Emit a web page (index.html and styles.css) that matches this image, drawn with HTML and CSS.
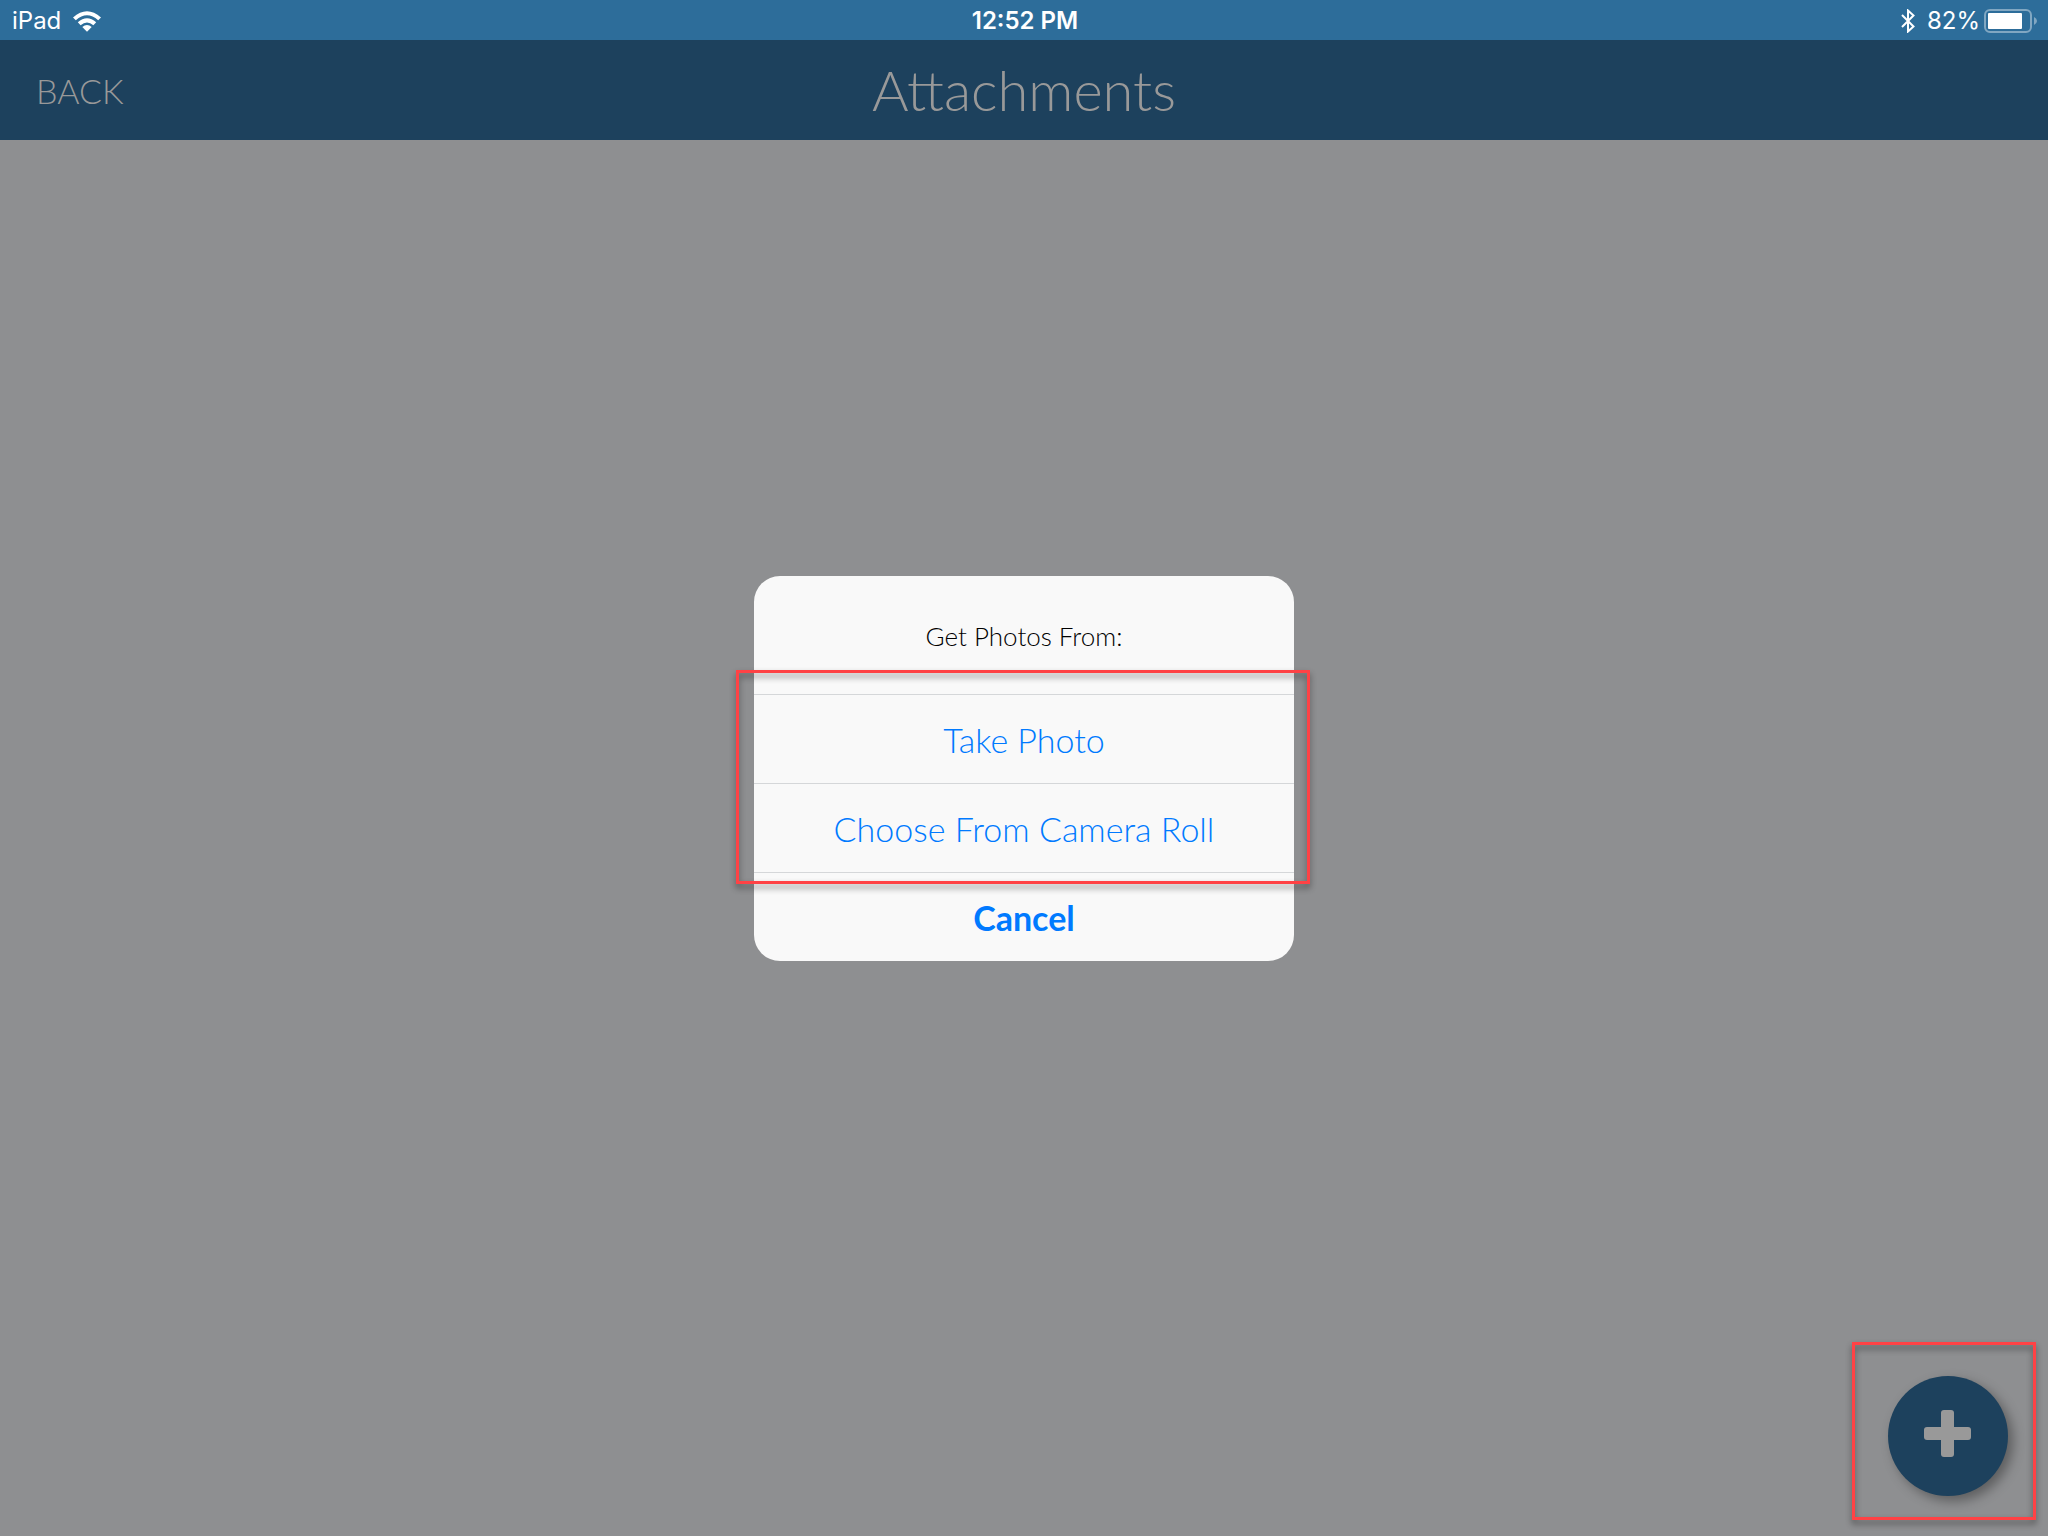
FILE: index.html
```html
<!DOCTYPE html>
<html lang="en">
<head>
  <meta charset="utf-8">
  <meta name="viewport" content="width=device-width, initial-scale=1">
  <title>Attachments</title>
  <link rel="stylesheet" href="styles.css">
</head>
<body>
  <div class="status-bar">
    <div class="status-left">
      <span>iPad</span>
      <svg class="wifi" width="28" height="21" viewBox="0 0 28 21" aria-label="Wi-Fi">
        <path d="M0 6.400Q14 -6 28 6.400L25.200 9.300Q14 -0.800 2.800 9.300Z"/>
        <path d="M4.800 11.300Q14 3 23.200 11.300L20.400 14.200Q14 8.600 7.600 14.200Z"/>
        <path d="M9.300 16Q14 12 18.700 16L14 20.800Z"/>
      </svg>
    </div>
    <time class="clock">12:52 PM</time>
    <div class="status-right">
      <svg class="bluetooth" width="14" height="24" viewBox="0 0 14 24" aria-label="Bluetooth">
        <path d="M1 6L12.500 17.500L7 22.500V1.500L12.500 6.500L1 18"/>
      </svg>
      <span>82%</span>
      <svg class="battery" width="54" height="24" viewBox="0 0 54 24" aria-label="Battery">
        <rect class="battery-case" x="1" y="1" width="46" height="22" rx="5"/>
        <rect class="battery-level" x="4" y="4" width="34" height="16" rx="1"/>
        <path class="battery-cap" d="M50 8Q53 9.500 53 12T50 16Z"/>
      </svg>
    </div>
  </div>

  <header class="nav-bar">
    <button class="back" type="button">BACK</button>
    <h1 class="page-title">Attachments</h1>
  </header>

  <main class="stage">
    <div class="add-area callout">
      <button class="add" type="button" aria-label="Add attachment">
        <svg width="48" height="48" viewBox="0 0 48 48">
          <rect x="17" y="0" width="13" height="47" rx="3"/>
          <rect x="0" y="17" width="47" height="13" rx="3"/>
        </svg>
      </button>
    </div>
  </main>

  <div class="overlay">
    <div class="dialog" role="dialog" aria-labelledby="dialog-title">
      <h2 class="dialog-title" id="dialog-title">Get Photos From:</h2>
      <div class="sources callout">
        <button class="option" type="button">Take Photo</button>
        <button class="option" type="button">Choose From Camera Roll</button>
      </div>
      <button class="option cancel" type="button">Cancel</button>
    </div>
  </div>
</body>
</html>
```
FILE: styles.css
```css
* {
  box-sizing: border-box;
}

body {
  margin: 0;
  min-height: 100vh;
  display: flex;
  flex-direction: column;
  background: #8e8f91;
  font-family: Lato, sans-serif;
  font-weight: 300;
}

button {
  margin: 0;
  padding: 0;
  border: 0;
  background: none;
  font: inherit;
  color: inherit;
  cursor: pointer;
}

.status-bar {
  display: grid;
  grid-template-columns: 1fr auto 1fr;
  align-items: center;
  height: 40px;
  padding: 1px 10px 0 12px;
  background: #2d6d9a;
  color: #fff;
  font: 400 24px/40px Inter, sans-serif;
}

.status-left,
.status-right {
  display: flex;
  align-items: center;
}

.status-left {
  gap: 12px;
}

.status-right {
  justify-content: flex-end;
  gap: 4px;
}

.clock {
  font-weight: 600;
}

.wifi {
  fill: #fff;
}

.bluetooth {
  margin-right: 8px;
  fill: none;
  stroke: #fff;
  stroke-width: 2;
}

.battery-case {
  fill: none;
  stroke: #81a7c2;
  stroke-width: 2;
}

.battery-level {
  fill: #fff;
}

.battery-cap {
  fill: #81a7c2;
}

.nav-bar {
  display: grid;
  grid-template-columns: 1fr auto 1fr;
  align-items: center;
  height: 100px;
  padding: 0 36px;
  background: #1d415d;
  color: #999;
}

.back {
  justify-self: start;
  padding-top: 2px;
  font-size: 34px;
  line-height: 40px;
}

.page-title {
  margin: 0;
  font-size: 56px;
  font-weight: 300;
  line-height: 68px;
}

.stage {
  flex: 1;
  display: flex;
  align-items: flex-end;
  justify-content: flex-end;
  padding: 16px 12px;
}

/* Red frame that calls out a group of controls */
.callout {
  position: relative;
}

.callout::after {
  content: "";
  position: absolute;
  inset: 0;
  border: 3px solid #ff4245;
  filter: drop-shadow(0 4px 3px rgba(0, 0, 0, 0.45));
  pointer-events: none;
}

.add-area {
  padding: 34px 28px 24px 36px;
}

.add {
  display: grid;
  place-items: center;
  width: 120px;
  height: 120px;
  padding-bottom: 4px;
  border-radius: 50%;
  background: #1d415d;
  box-shadow: 5px 5px 12px rgba(0, 0, 0, 0.35);
}

.add svg {
  fill: #999;
}

.overlay {
  position: fixed;
  inset: 0;
  display: grid;
  place-items: center;
}

.dialog {
  display: flex;
  flex-direction: column;
  width: 540px;
  max-width: 100%;
  border-radius: 26px;
  background: #f9f9f9;
}

.dialog-title {
  margin: 0;
  padding: 44px 32px 42px;
  color: #000;
  font-size: 26px;
  font-weight: 300;
  line-height: 32px;
  text-align: center;
}

.sources {
  display: flex;
  flex-direction: column;
}

.sources::after {
  inset: -24px -16px -12px -18px;
}

.option {
  height: 89px;
  padding-top: 3px;
  border-top: 1px solid #d5d7d9;
  color: #007aff;
  font-size: 34px;
  line-height: 40px;
}

.cancel {
  font-weight: 700;
}
```
